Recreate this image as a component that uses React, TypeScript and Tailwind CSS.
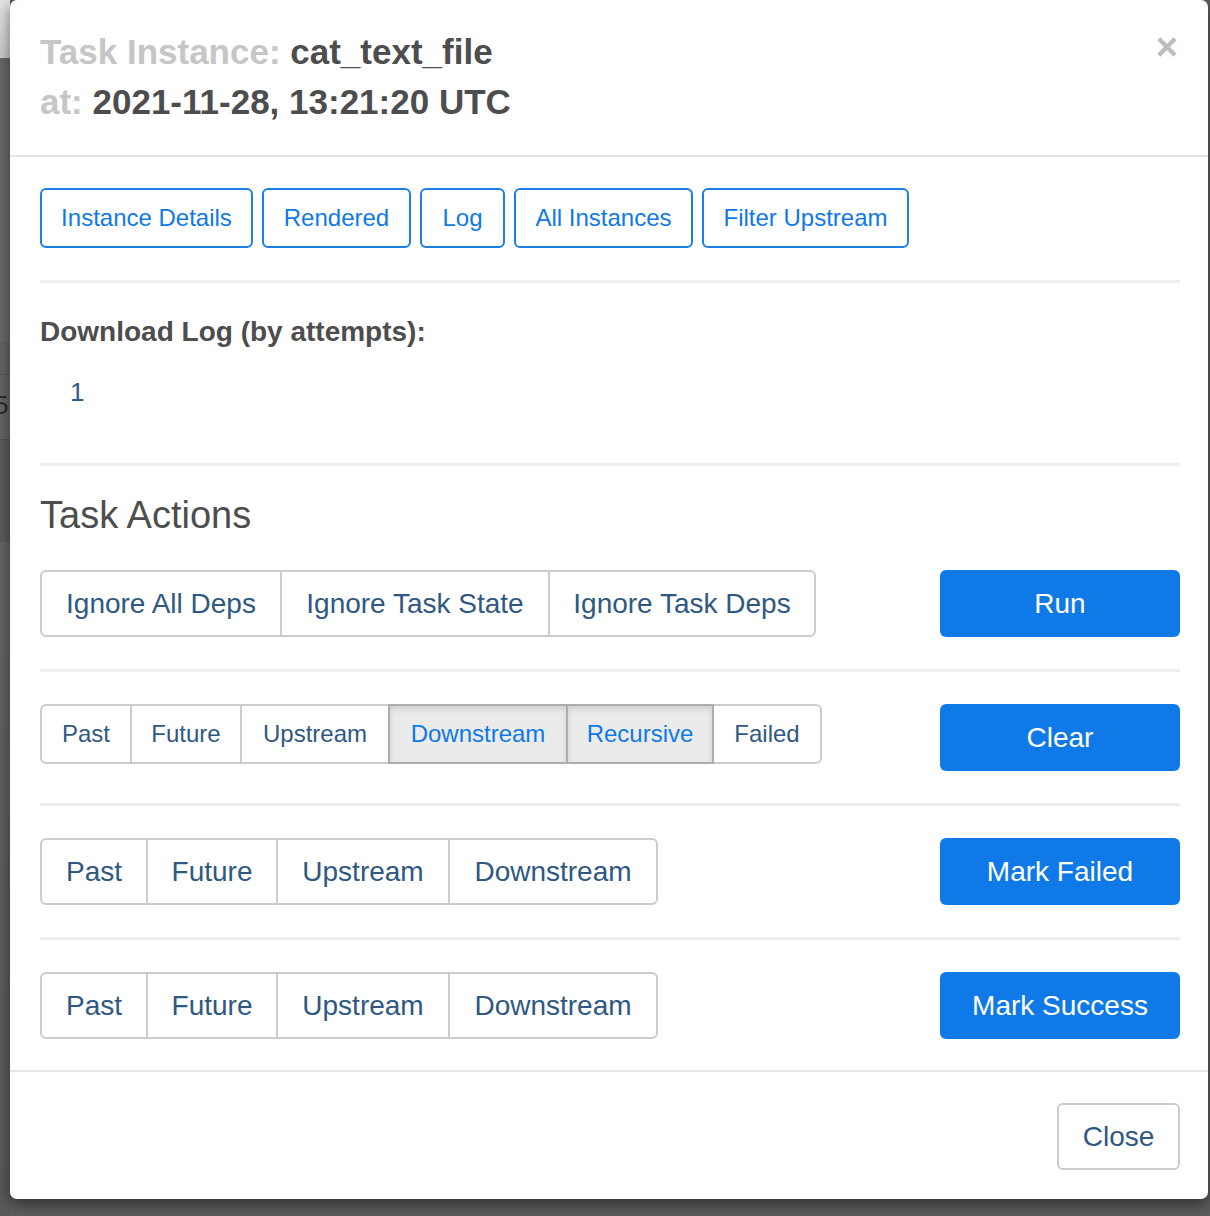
import React from "react";

const font = { fontFamily: '"Liberation Sans", Arial, Helvetica, sans-serif' };

function Group({ items, size }: { items: { label: string; active?: boolean; w: number }[]; size: "lg" | "sm" }) {
  return (
    <div className="flex">
      {items.map((it, i) => {
        const first = i === 0;
        const last = i === items.length - 1;
        return (
          <div
            key={it.label}
            style={{ width: it.w }}
            className={[
              "flex items-center justify-center border-2 shrink-0",
              size === "lg" ? "h-[67px] text-[28px]" : "h-[60px] text-[24px]",
              first ? "rounded-l-[6px]" : "-ml-[2px]",
              last ? "rounded-r-[6px]" : "",
              it.active
                ? "bg-[#ebebeb] border-[#adadad] text-[#0f79e8] shadow-[inset_0_3px_6px_rgba(0,0,0,0.12)] relative z-10"
                : "bg-white border-[#cccccc] text-[#2f5882]",
            ].join(" ")}
          >
            {it.label}
          </div>
        );
      })}
    </div>
  );
}

function Primary({ label }: { label: string }) {
  return (
    <div className="w-[240px] h-[67px] rounded-[6px] bg-[#0f79e8] text-white text-[28px] flex items-center justify-center shrink-0">
      {label}
    </div>
  );
}

function Hr() {
  return <div className="h-[3px] bg-[#eeeeee] w-full" />;
}

export default function App() {
  const navs = [
    { l: "Instance Details", w: 213 },
    { l: "Rendered", w: 149 },
    { l: "Log", w: 85 },
    { l: "All Instances", w: 179 },
    { l: "Filter Upstream", w: 207 },
  ];
  return (
    <div className="w-[1210px] h-[1216px] bg-[#5d5d5d] flex overflow-hidden" style={font}>
      {/* backdrop strip */}
      <div className="w-[10px] shrink-0 flex flex-col">
        <div className="h-[58px] bg-gradient-to-b from-[#e6e6e6] to-[#cdcdcd]" />
        <div className="h-[284px] bg-[#696969]" />
        <div className="h-[33px] bg-[#656565] border-b border-[#555555]" />
        <div className="h-[65px] bg-[#676767] border-b border-[#555555] overflow-hidden">
          <div className="text-[26px] leading-[60px] text-[#2a2a2a] -ml-[6px]">5</div>
        </div>
        <div className="h-[102px] bg-[#5c5c5c]" />
        <div className="h-[114px] bg-[#666666]" />
        <div className="flex-1 bg-gradient-to-b from-[#636363] to-[#5a5a5a]" />
      </div>

      {/* modal */}
      <div className="w-[1198px] h-[1199px] shrink-0 bg-white rounded-[7px] shadow-[0_5px_15px_rgba(0,0,0,0.5)] flex flex-col">
        {/* header */}
        <div className="flex justify-between pl-[30px] pr-[28px] pt-[27px] pb-[28px] border-b-2 border-[#e5e5e5]">
          <div className="text-[35px] leading-[50px] font-bold">
            <div>
              <span className="text-[#c6c6c6]">Task Instance: </span>
              <span className="text-[#4d4d4d]">cat_text_file</span>
            </div>
            <div>
              <span className="text-[#c6c6c6]">at: </span>
              <span className="text-[#4d4d4d]">2021-11-28, 13:21:20 UTC</span>
            </div>
          </div>
          <div className="text-[38px] leading-[40px] font-bold text-[#bdbdbd] mr-[2px]">×</div>
        </div>

        {/* body */}
        <div className="pl-[30px] pr-[28px] pt-[31px] pb-[31px] flex flex-col">
          <div className="flex gap-[9px]">
            {navs.map((n) => (
              <div
                key={n.l}
                style={{ width: n.w }}
                className="h-[60px] border-2 border-[#1b7fe6] rounded-[6px] text-[24px] text-[#0f79e8] flex items-center justify-center shrink-0"
              >
                {n.l}
              </div>
            ))}
          </div>

          <div className="mt-[32px]">
            <Hr />
          </div>

          <div className="mt-[29px] text-[28px] leading-[40px] font-bold text-[#4d4d4d]">Download Log (by attempts):</div>
          <div className="mt-[20px] pl-[30px] text-[26px] leading-[40px] text-[#2e5d8c]">1</div>

          <div className="mt-[51px]">
            <Hr />
          </div>

          <div className="mt-[24px] text-[38px] leading-[50px] text-[#4d4d4d]">Task Actions</div>

          <div className="mt-[30px] flex justify-between items-start">
            <Group
              size="lg"
              items={[
                { label: "Ignore All Deps", w: 242 },
                { label: "Ignore Task State", w: 270 },
                { label: "Ignore Task Deps", w: 268 },
              ]}
            />
            <Primary label="Run" />
          </div>

          <div className="mt-[32px]">
            <Hr />
          </div>

          <div className="mt-[32px] flex justify-between items-start">
            <Group
              size="sm"
              items={[
                { label: "Past", w: 92 },
                { label: "Future", w: 112 },
                { label: "Upstream", w: 150 },
                { label: "Downstream", w: 180, active: true },
                { label: "Recursive", w: 148, active: true },
                { label: "Failed", w: 110 },
              ]}
            />
            <Primary label="Clear" />
          </div>

          <div className="mt-[32px]">
            <Hr />
          </div>

          <div className="mt-[32px] flex justify-between items-start">
            <Group
              size="lg"
              items={[
                { label: "Past", w: 108 },
                { label: "Future", w: 132 },
                { label: "Upstream", w: 174 },
                { label: "Downstream", w: 210 },
              ]}
            />
            <Primary label="Mark Failed" />
          </div>

          <div className="mt-[32px]">
            <Hr />
          </div>

          <div className="mt-[32px] flex justify-between items-start">
            <Group
              size="lg"
              items={[
                { label: "Past", w: 108 },
                { label: "Future", w: 132 },
                { label: "Upstream", w: 174 },
                { label: "Downstream", w: 210 },
              ]}
            />
            <Primary label="Mark Success" />
          </div>
        </div>

        {/* footer */}
        <div className="border-t-2 border-[#e5e5e5] pl-[30px] pr-[28px] pt-[31px] flex justify-end">
          <div className="w-[123px] h-[67px] border-2 border-[#cccccc] rounded-[6px] text-[28px] text-[#2f5882] flex items-center justify-center">
            Close
          </div>
        </div>
      </div>
    </div>
  );
}
